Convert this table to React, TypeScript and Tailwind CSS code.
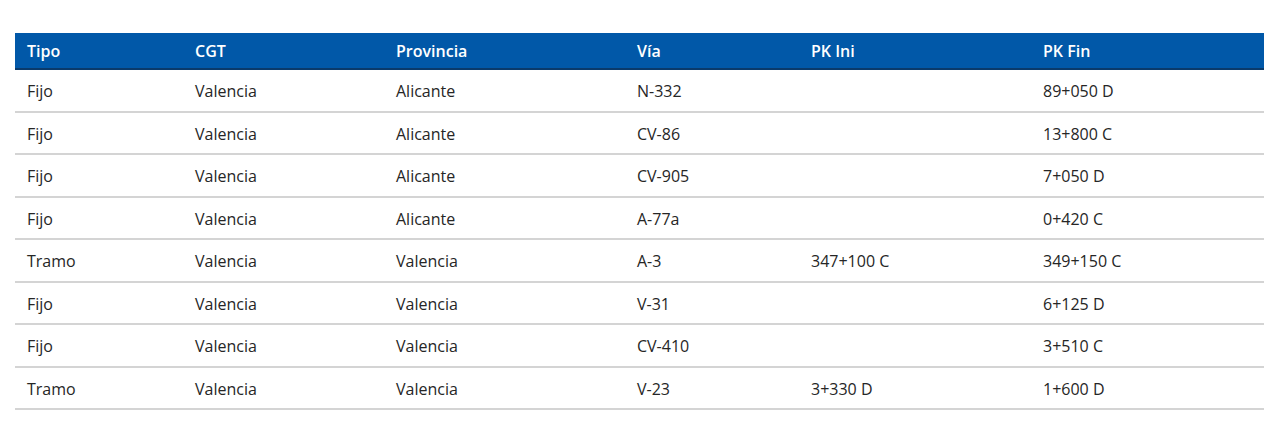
import React from "react";

const rows = [
  ["Fijo", "Valencia", "Alicante", "N-332", "", "89+050 D"],
  ["Fijo", "Valencia", "Alicante", "CV-86", "", "13+800 C"],
  ["Fijo", "Valencia", "Alicante", "CV-905", "", "7+050 D"],
  ["Fijo", "Valencia", "Alicante", "A-77a", "", "0+420 C"],
  ["Tramo", "Valencia", "Valencia", "A-3", "347+100 C", "349+150 C"],
  ["Fijo", "Valencia", "Valencia", "V-31", "", "6+125 D"],
  ["Fijo", "Valencia", "Valencia", "CV-410", "", "3+510 C"],
  ["Tramo", "Valencia", "Valencia", "V-23", "3+330 D", "1+600 D"],
];

const headers = ["Tipo", "CGT", "Provincia", "Vía", "PK Ini", "PK Fin"];
const widths = ["w-[168px]", "w-[201px]", "w-[241px]", "w-[174px]", "w-[232px]", "w-[233px]"];

export default function App() {
  return (
    <div className="w-[1279px] h-[448px] bg-white pt-[33px] pl-[15px] font-['Open_Sans',sans-serif]">
      <table className="w-[1249px] border-collapse table-fixed text-[16px]">
        <colgroup>
          {widths.map((w, i) => (
            <col key={i} className={w} />
          ))}
        </colgroup>
        <thead>
          <tr className="bg-[#0158a8] border-b-2 border-[#0a3a6b]">
            {headers.map((h) => (
              <th key={h} className="h-[36px] px-3 text-left font-semibold text-white leading-none">
                {h}
              </th>
            ))}
          </tr>
        </thead>
        <tbody>
          {rows.map((r, i) => (
            <tr key={i} className="border-b-2 border-[#d4d4d4]">
              {r.map((c, j) => (
                <td key={j} className="h-[42.5px] px-3 pt-[2px] text-[#262626] font-medium leading-none">
                  {c}
                </td>
              ))}
            </tr>
          ))}
        </tbody>
      </table>
    </div>
  );
}
